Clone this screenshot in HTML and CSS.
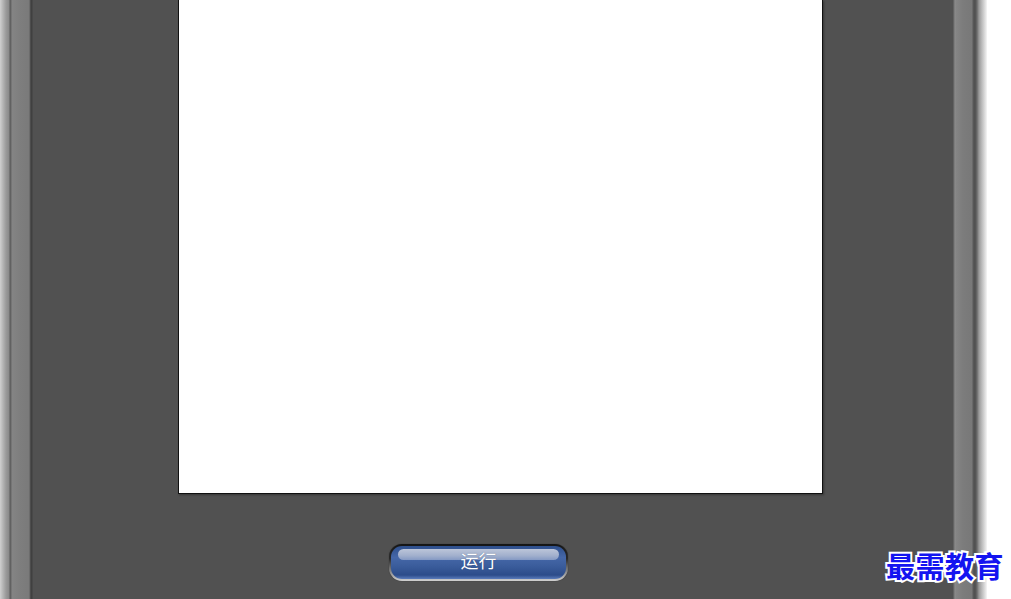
FILE: index.html
```html
<!DOCTYPE html>
<html lang="zh">
<head>
<meta charset="utf-8">
<title>运行</title>
<link rel="stylesheet" href="styles.css">
</head>
<body>
<div class="screen">
  <div class="frame-left"></div>
  <div class="main">
    <div class="panel"></div>
    <button class="run-btn"><span class="shine"></span><span class="label">运行</span></button>
  </div>
  <div class="frame-right"></div>
  <div class="outside"></div>
  <div class="watermark">最需教育</div>
</div>
</body>
</html>
```
FILE: styles.css
```css
html, body {
  margin: 0;
  padding: 0;
  width: 1011px;
  height: 599px;
  overflow: hidden;
  background: #ffffff;
}
.screen {
  position: relative;
  display: flex;
  width: 1011px;
  height: 599px;
}
.frame-left {
  width: 33px;
  flex: none;
  background: linear-gradient(to right,
    #d0d0d0 0px, #b4b4b4 3px, #9a9a9a 6px, #8a8a8a 9px,
    #5c5c5c 10px, #666666 11px, #848484 12px, #7e7e7e 20px, #7a7a7a 29px,
    #5e5e5e 30px, #3c3c3c 31px, #444444 32px, #4c4c4c 33px);
}
.main {
  width: 920px;
  flex: none;
  background: #515151;
  display: flex;
  flex-direction: column;
  align-items: flex-start;
}
.panel {
  margin-left: 145px;
  width: 643px;
  height: 493px;
  background: #ffffff;
  border: 1px solid #111111;
  border-top: none;
  box-shadow: 1px 1px 2px rgba(0,0,0,0.35);
}
.run-btn {
  position: relative;
  margin-top: 50px;
  margin-left: 356px;
  width: 179px;
  height: 37px;
  padding: 0 0 6px 0;
  border: 2px solid transparent;
  border-radius: 13px;
  background:
    linear-gradient(to bottom, #2e4f8c 0%, #4567a8 35%, #3b5d9c 60%, #2c4c8a 88%, #5b7cbc 100%) padding-box,
    linear-gradient(to bottom, #151515 0%, #2a2a2a 40%, #8a8a8a 75%, #d0d0d0 100%) border-box;
  box-shadow: 0 0 1px rgba(0,0,0,0.6);
  cursor: pointer;
}
.shine {
  position: absolute;
  left: 7px;
  right: 7px;
  top: 3px;
  height: 11px;
  border-radius: 6px;
  background: linear-gradient(to bottom, #bcc5d9 0%, #a2b0cd 60%, #8499c4 100%);
}
.label {
  position: relative;
  display: block;
  font-family: "Noto Sans CJK SC", "Noto Sans", sans-serif;
  font-size: 18px;
  line-height: 26px;
  color: #ffffff;
  text-align: center;
  text-shadow: 0 0 1px rgba(30,50,90,0.6);
}
.frame-right {
  width: 34px;
  flex: none;
  background: linear-gradient(to right,
    #5a5a5a 0px, #6c6c6c 1px, #8c8c8c 2px, #858585 3px, #7c7c7c 10px, #787878 19px,
    #5a5a5a 20px, #4e4e4e 22px, #6a6a6a 24px,
    #9a9a9a 26px, #bdbdbd 29px, #dedede 32px, #f6f6f6 34px);
}
.outside {
  flex: 1;
  background: #ffffff;
}
.watermark {
  position: absolute;
  left: 886px;
  top: 545px;
  font-family: "Noto Sans CJK SC", sans-serif;
  font-weight: 700;
  font-size: 29px;
  line-height: 40px;
  letter-spacing: 0.5px;
  color: #1414f0;
  -webkit-text-stroke: 4px #ffffff;
  paint-order: stroke fill;
}
```
